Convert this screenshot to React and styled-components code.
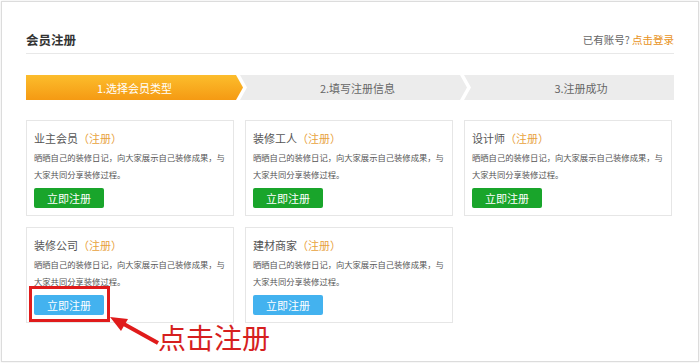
import React from 'react';
import styled, { createGlobalStyle } from 'styled-components';

const GlobalStyle = createGlobalStyle`
    html, body {
        margin: 0;
        padding: 0;
        background: #ffffff;
    }
    body {
        font-family: "Noto Sans CJK SC", "Liberation Sans", sans-serif;
    }
`;

const STEPS = ['1.选择会员类型', '2.填写注册信息', '3.注册成功'];

const TYPES = [
    { name: '业主会员', color: 'green' },
    { name: '装修工人', color: 'green' },
    { name: '设计师', color: 'green' },
    { name: '装修公司', color: 'blue', highlighted: true },
    { name: '建材商家', color: 'blue' },
];

const DESC = '晒晒自己的装修日记，向大家展示自己装修成果，与大家共同分享装修过程。';

const App = () => {
    return (
        <>
            <GlobalStyle />
            <Frame>
                <Header>
                    <Title>会员注册</Title>
                    <LoginHint>
                        已有账号? <LoginLink>点击登录</LoginLink>
                    </LoginHint>
                </Header>

                <Steps>
                    {STEPS.map((label, i) => (
                        <Step key={label} index={i} active={i === 0}>
                            {label}
                        </Step>
                    ))}
                </Steps>

                <CardGrid>
                    {TYPES.map((t) => (
                        <Card key={t.name}>
                            <CardTitle>
                                {t.name}<RegTag>（注册）</RegTag>
                            </CardTitle>
                            <CardDesc>{DESC}</CardDesc>
                            <ButtonWrap highlighted={t.highlighted}>
                                <RegButton color={t.color}>立即注册</RegButton>
                            </ButtonWrap>
                        </Card>
                    ))}
                </CardGrid>

                {/* 标注：箭头 + 文字 */}
                <Arrow width="56" height="34" viewBox="0 0 56 34">
                    <polygon points="3,3 21,5 14,17" fill="#e01b1b" />
                    <line x1="15" y1="9" x2="51" y2="29" stroke="#e01b1b" strokeWidth="4" />
                </Arrow>
                <Callout>点击注册</Callout>
            </Frame>
        </>
    );
};

export default App;

const Frame = styled.div`
    position: relative;
    box-sizing: border-box;
    width: 698px;
    height: 361px;
    margin: 1px;
    border: 1px solid #dcdcdc;
    box-shadow: 0 0 2px #e6e6e6;
    padding: 0 24px;
`;

const Header = styled.div`
    display: flex;
    justify-content: space-between;
    align-items: center;
    padding: 29px 0 4px;
    border-bottom: 1px solid #e8e8e8;
    line-height: 18px;
`;

const Title = styled.h2`
    margin: 0;
    font-size: 12.5px;
    font-weight: bold;
    color: #333333;
`;

const LoginHint = styled.span`
    font-size: 10.5px;
    color: #666666;
`;

const LoginLink = styled.a`
    color: #e8921a;
    cursor: pointer;
`;

const Steps = styled.div`
    display: flex;
    margin-top: 21px;
    height: 25px;
`;

const Step = styled.div`
    box-sizing: border-box;
    height: 25px;
    display: flex;
    align-items: center;
    justify-content: center;
    font-size: 11px;
    color: ${({ active }) => (active ? '#ffffff' : '#666666')};
    background: ${({ active }) => (active ? 'linear-gradient(#fcbd2c, #f59a13)' : '#ececec')};
    width: ${({ index }) => (index === 0 ? '217px' : index === 1 ? '227px' : 'auto')};
    flex: ${({ index }) => (index === 2 ? 1 : 'none')};
    margin-left: ${({ index }) => (index === 0 ? 0 : '-3px')};
    padding-left: ${({ index }) => (index === 0 ? 0 : index === 1 ? '8px' : '24px')};
    clip-path: ${({ index }) =>
        index === 0
            ? 'polygon(0 0, calc(100% - 7px) 0, 100% 50%, calc(100% - 7px) 100%, 0 100%)'
            : index === 1
            ? 'polygon(0 0, calc(100% - 7px) 0, 100% 50%, calc(100% - 7px) 100%, 0 100%, 7px 50%)'
            : 'polygon(0 0, 100% 0, 100% 100%, 0 100%, 7px 50%)'};
`;

const CardGrid = styled.div`
    display: grid;
    grid-template-columns: repeat(3, 208px);
    column-gap: 11px;
    row-gap: 11px;
    margin-top: 20px;
`;

const Card = styled.div`
    box-sizing: border-box;
    border: 1px solid #e6e6e6;
    padding: 10px 4px 7px 7px;
`;

const CardTitle = styled.div`
    font-size: 11px;
    line-height: 14px;
    color: #555555;
`;

const RegTag = styled.span`
    color: #e8a23c;
`;

const CardDesc = styled.p`
    margin: 4px 0 5px;
    font-size: 8.3px;
    line-height: 17px;
    color: #555555;
`;

const ButtonWrap = styled.div`
    position: relative;
    width: 70px;

    &::after {
        content: '';
        display: ${({ highlighted }) => (highlighted ? 'block' : 'none')};
        position: absolute;
        left: -5px;
        right: -6px;
        top: -9px;
        bottom: -7px;
        border: 3px solid #e01b1b;
        pointer-events: none;
    }
`;

const RegButton = styled.button`
    display: block;
    width: 70px;
    height: 20px;
    padding: 0;
    border: none;
    border-radius: 2px;
    font-family: inherit;
    font-size: 11px;
    color: #ffffff;
    background: ${({ color }) => (color === 'blue' ? '#43b2ef' : '#19a52b')};
    cursor: pointer;
`;

const Arrow = styled.svg`
    position: absolute;
    left: 105px;
    top: 312px;
`;

const Callout = styled.div`
    position: absolute;
    left: 156px;
    top: 321px;
    font-size: 28px;
    line-height: 28px;
    color: #d61f1f;
    white-space: nowrap;
`;
